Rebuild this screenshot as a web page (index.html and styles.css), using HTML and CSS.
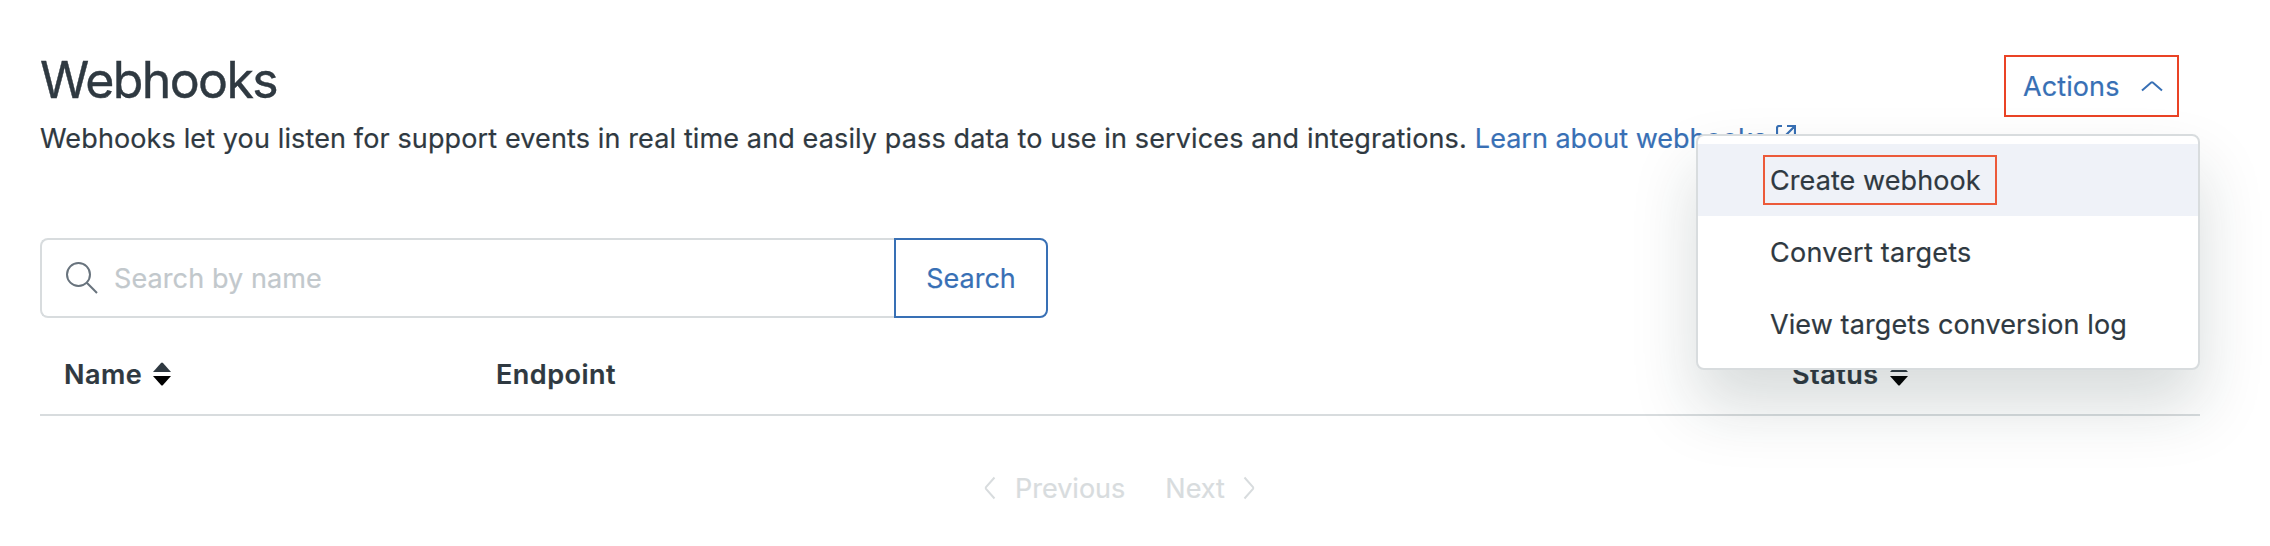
FILE: index.html
```html
<!DOCTYPE html>
<html lang="en">
<head>
<meta charset="utf-8">
<title>Webhooks</title>
<link rel="stylesheet" href="styles.css">
</head>
<body>
<main class="page">
  <header class="header">
    <div class="intro">
      <h1 class="title">Webhooks</h1>
      <p class="lead"><span class="lead-text">Webhooks let you listen for support events in real time and easily pass data to use in services and integrations.</span><a class="link"><span class="link-text">Learn about webhooks</span><svg class="external" viewBox="0 0 20 20" width="20" height="20"><path d="M6 1H3a2 2 0 0 0-2 2v14a2 2 0 0 0 2 2h14a2 2 0 0 0 2-2v-3M11 1h8v8M19 1L8 12"/></svg></a></p>
    </div>
    <div class="actions">
      <button class="actions-button"><span class="actions-text">Actions</span><svg class="chevron-up" viewBox="0 0 22 12" width="22" height="12"><path d="M1 10.5L10.2 2.5q.8-.6 1.6 0L21 10.5"/></svg></button>
      <div class="menu">
        <div class="item active"><span class="create">Create webhook</span></div>
        <div class="item"><span class="convert">Convert targets</span></div>
        <div class="item"><span class="log">View targets conversion log</span></div>
      </div>
    </div>
  </header>
  <div class="search">
    <div class="field">
      <svg class="magnifier" viewBox="0 0 32 32" width="32" height="32"><circle cx="12.5" cy="12.5" r="11.5"/><path d="M20.8 20.8L31 31"/></svg>
      <span class="placeholder">Search by name</span>
    </div>
    <button class="search-button"><span class="search-text">Search</span></button>
  </div>
  <div class="table-head">
    <div class="cell"><span class="name">Name</span><svg class="sort" viewBox="0 0 18 24" width="18" height="24"><path class="asc" d="M0 10L8 .9q1-1 2 0L18 10z"/><path class="desc" d="M0 14h18L10 23.100q-1 1-2 0z"/></svg></div>
    <div class="cell"><span class="endpoint">Endpoint</span></div>
    <div class="cell"><span class="status">Status</span><svg class="sort" viewBox="0 0 18 24" width="18" height="24"><path class="asc" d="M0 10L8 .9q1-1 2 0L18 10z"/><path class="desc" d="M0 14h18L10 23.100q-1 1-2 0z"/></svg></div>
  </div>
  <nav class="pager">
    <svg viewBox="0 0 12 24" width="12" height="24"><path d="M10.500 1.500L2 11.200q-.6.8 0 1.600L10.500 22.500"/></svg>
    <span class="previous">Previous</span>
    <span class="next">Next</span>
    <svg viewBox="0 0 12 24" width="12" height="24"><path d="M1.500 1.500L10 11.200q.6.8 0 1.600L1.500 22.500"/></svg>
  </nav>
</main>
</body>
</html>
```
FILE: styles.css
```css
* { box-sizing: border-box; }
body {
  margin: 0;
  background: #fff;
  color: #2f3941;
  font: 27px/40px Inter, "Liberation Sans", sans-serif;
  -webkit-text-stroke: .2px currentColor;
  overflow: hidden;
}
svg { display: block; flex: none; fill: none; stroke: currentColor; stroke-width: 2; }
span { padding-top: 2px; white-space: nowrap; }
button { font: inherit; background: none; cursor: pointer; }
.page { height: 546px; padding: 0 70px 0 40px; }
.header { display: flex; justify-content: space-between; height: 238px; }
.intro { padding-top: 50px; }
.title {
  margin: 0 0 7px;
  font-size: 50px;
  line-height: 60px;
  font-weight: 400;
  letter-spacing: -1.600px;
  -webkit-text-stroke-width: .4px;
}
.lead { display: flex; margin: 0; }
.lead-text { letter-spacing: .125px; }
.link { display: flex; margin-left: 8px; color: #3870b5; }
.external { margin: 8px 0 0 9px; stroke-width: 2.200; }
.actions { position: relative; padding: 55px 21px 0 0; }
.actions-button {
  display: flex;
  align-items: center;
  justify-content: space-between;
  width: 175px;
  height: 62px;
  padding: 0 14px 0 17px;
  border: 2px solid #ea4325;
  color: #3870b5;
}
.actions-text { letter-spacing: .1px; }
.menu {
  position: absolute;
  top: 134px;
  right: 0;
  width: 504px;
  height: 236px;
  padding: 8px 0;
  border: 2px solid #d8dcde;
  border-radius: 8px;
  background: #fff;
  box-shadow: 0 36px 64px 0 rgba(23, 48, 47, .17);
}
.item { display: flex; align-items: center; height: 72px; padding-left: 72px; }
.active { background: #eff2f8; padding-left: 65px; }
.create {
  width: 234px;
  height: 50px;
  padding: 4px 0 0 5px;
  border: 2px solid #ec5a3a;
  letter-spacing: .08px;
}
.convert { letter-spacing: .25px; }
.log { letter-spacing: .1px; }
.search { display: flex; width: 1008px; height: 80px; }
.field {
  display: flex;
  align-items: center;
  width: 854px;
  padding-left: 24px;
  border: 2px solid #d8dcde;
  border-right: 0;
  border-radius: 8px 0 0 8px;
  color: #c2c8cc;
}
.magnifier { margin-right: 16px; color: #68737d; }
.placeholder { letter-spacing: .1px; }
.search-button {
  display: flex;
  align-items: center;
  justify-content: center;
  width: 154px;
  padding: 0;
  border: 2px solid #3870b5;
  border-radius: 0 8px 8px 0;
  color: #3870b5;
}
.table-head {
  display: grid;
  grid-template-columns: 432px 1296px 1fr;
  height: 98px;
  padding: 15px 0 0 24px;
  border-bottom: 2px solid #d8dcde;
  font-weight: 600;
  letter-spacing: .5px;
}
.cell { display: flex; align-items: center; }
.sort { margin-left: 11px; stroke: none; }
.asc { fill: #2f3941; }
.desc { fill: #000; }
.pager { display: flex; align-items: center; height: 40px; margin: 52px 0 0 944px; color: #d8dcde; }
.previous { margin-left: 19px; }
.next { margin: 0 18px 0 40px; }
```
